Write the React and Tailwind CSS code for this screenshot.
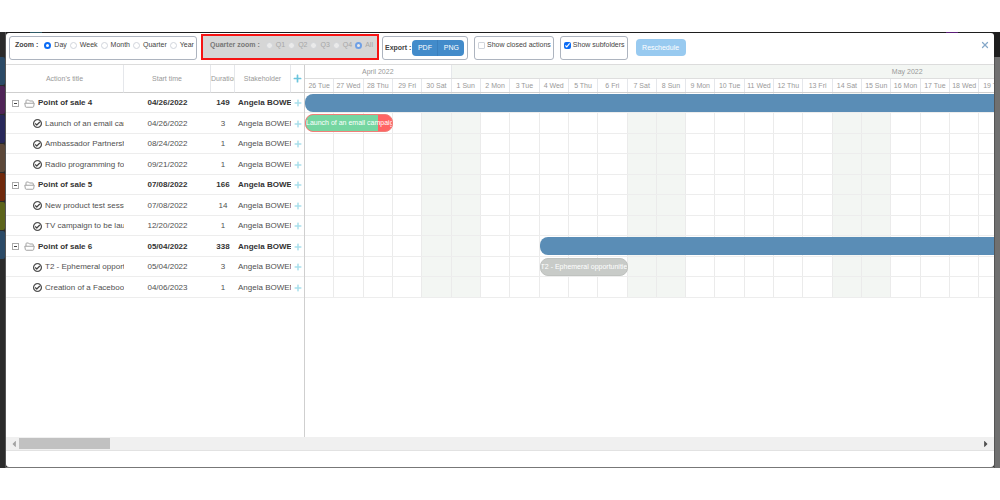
import { useState } from 'react'
import { FaPlus, FaRegCheckCircle, FaCaretLeft, FaCaretRight } from 'react-icons/fa'
import { X } from 'lucide-react'

const TASKS = [
    { id: 1,  title: 'Point of sale 4', start: '04/26/2022', duration: 149, folder: true, bar: 'col-start-1 col-end-48' },
    { id: 2,  title: 'Launch of an email campaign', start: '04/26/2022', duration: 3, bar: 'col-start-1 col-span-6', progress: 79 },
    { id: 3,  title: 'Ambassador Partnership', start: '08/24/2022', duration: 1 },
    { id: 4,  title: 'Radio programming for', start: '09/21/2022', duration: 1 },
    { id: 5,  title: 'Point of sale 5', start: '07/08/2022', duration: 166, folder: true },
    { id: 6,  title: 'New product test session', start: '07/08/2022', duration: 14 },
    { id: 7,  title: 'TV campaign to be launched', start: '12/20/2022', duration: 1 },
    { id: 8,  title: 'Point of sale 6', start: '05/04/2022', duration: 338, folder: true, bar: 'col-start-17 col-end-48' },
    { id: 9,  title: 'T2 - Ephemeral opportunities', start: '05/04/2022', duration: 3, bar: 'col-start-17 col-span-6' },
    { id: 10, title: 'Creation of a Facebook', start: '04/06/2023', duration: 1 },
]

const DAYS = [
    '26 Tue', '27 Wed', '28 Thu', '29 Fri', '30 Sat', '1 Sun', '2 Mon', '3 Tue',
    '4 Wed', '5 Thu', '6 Fri', '7 Sat', '8 Sun', '9 Mon', '10 Tue', '11 Wed',
    '12 Thu', '13 Fri', '14 Sat', '15 Sun', '16 Mon', '17 Tue', '18 Wed', '19 Thu',
]

const STRIPES = ['bg-[#2b4a66]', 'bg-[#4f2457]', 'bg-[#28285a]', 'bg-[#5c4839]', 'bg-[#70290c]', 'bg-[#5c641b]', 'bg-[#2b4a66]']

// Two tracks per day, the last day is cut in half by the window edge
const TRACKS = 'grid grid-cols-[repeat(47,minmax(0,1fr))]'

const isWeekend = day => day.endsWith('Sat') || day.endsWith('Sun')
const daySpan = i => (i === DAYS.length - 1 ? 'col-span-1' : 'col-span-2 border-r')
const rowHeight = i => (i % 2 ? 'h-[21px]' : 'h-5')

function FolderIcon() {
    return (
        <svg
            className="mr-[3px] ml-[5px] h-[9px] w-[11px] shrink-0 text-[#999]"
            viewBox="0 0 22 18"
            fill="none"
            stroke="currentColor"
            strokeWidth="1.8"
            strokeLinejoin="round"
        >
            <path d="M4 8V3.5Q4 2 5.500 2H9L11 4H17Q18.500 4 18.500 5.500V8" />
            <path d="M1.500 8.500H20.500L19.300 15Q19 16.500 17.500 16.500H4.500Q3 16.500 2.700 15Z" />
        </svg>
    )
}

function RadioGroup({ name, label, options, value, onChange, disabled }) {
    return (
        <div role="radiogroup" aria-label={label} className="flex items-center gap-[3px]">
            {options.map(option => (
                <label key={option} className={`flex items-center gap-[3px] ${disabled ? 'opacity-50' : ''}`}>
                    <input
                        type="radio"
                        name={name}
                        checked={value === option}
                        onChange={() => onChange(option)}
                        className="size-[7px] appearance-none rounded-full border border-gray-300 bg-white checked:border-2 checked:border-[#0b6cf5]"
                    />
                    {option}
                </label>
            ))}
        </div>
    )
}

function CheckOption({ label, checked, onChange }) {
    return (
        <label className="flex h-6 items-start gap-[2px] rounded-[3px] border border-gray-400/80 pt-[3px] pr-[2px] pl-[3px]">
            <input
                type="checkbox"
                checked={checked}
                onChange={onChange}
                className="mt-[2px] size-[7px] appearance-none rounded-[1px] border border-gray-300 accent-[#0b6cf5] checked:appearance-auto"
            />
            <span className="leading-[10px]">{label}</span>
        </label>
    )
}

function Toolbar() {
    const [zoom, setZoom]             = useState('Day')
    const [quarter, setQuarter]       = useState('All')
    const [closed, setClosed]         = useState(false)
    const [subfolders, setSubfolders] = useState(true)

    return (
        <div className="flex h-[31px] items-end pb-1 pl-[3px] text-[7px] leading-[10px] whitespace-nowrap text-[#444]">
            <div className="flex h-6 w-[188px] items-start gap-[6px] rounded-[3px] border border-gray-400/80 pt-[3px] pl-[5px]">
                <b>Zoom :</b>
                <RadioGroup
                    name="zoom"
                    label="Zoom"
                    options={['Day', 'Week', 'Month', 'Quarter', 'Year']}
                    value={zoom}
                    onChange={setZoom}
                />
            </div>

            <div className="ml-1 flex h-[26px] w-[178px] items-start gap-[6px] border-2 border-[#f61414] bg-[#d6d6d6] pt-1 pl-[7px] text-[#777]">
                <b>Quarter zoom :</b>
                <RadioGroup
                    name="quarter"
                    label="Quarter zoom"
                    options={['Q1', 'Q2', 'Q3', 'Q4', 'All']}
                    value={quarter}
                    onChange={setQuarter}
                    disabled
                />
            </div>

            <div className="ml-[3px] flex h-6 w-[86px] items-center gap-px rounded-[3px] border border-gray-400/80 pl-[2px]">
                <b>Export :</b>
                <div className="flex h-4">
                    <button className="w-[26px] rounded-l-sm border-r border-[#3a7fbd] bg-[#428bca] text-white">PDF</button>
                    <button className="w-[26px] rounded-r-sm bg-[#428bca] text-white">PNG</button>
                </div>
            </div>

            <div className="ml-[6px] flex gap-[6px]">
                <CheckOption label="Show closed actions" checked={closed} onChange={() => setClosed(!closed)} />
                <CheckOption label="Show subfolders" checked={subfolders} onChange={() => setSubfolders(!subfolders)} />
            </div>

            <button className="mb-1 ml-2 h-[17px] w-[50px] rounded-sm bg-[#98caf0] text-white">Reschedule</button>

            <button aria-label="Close" className="mr-1 mb-[10px] ml-auto text-[#86a9c9]">
                <X size={10} strokeWidth={3} />
            </button>
        </div>
    )
}

function TaskTable() {
    return (
        <table className="w-[298px] shrink-0 table-fixed border-separate border-spacing-0 self-start text-[8px] leading-[10px] whitespace-nowrap text-[#505050]">
            <colgroup>
                <col className="w-[118px]" />
                <col className="w-[87px]" />
                <col className="w-6" />
                <col className="w-14" />
                <col className="w-[13px]" />
            </colgroup>
            <thead>
                <tr className="h-7 text-[7px] text-[#999] *:border-b *:border-b-[#cfcfcf] *:p-0 *:font-normal">
                    <th className="border-r border-r-gray-200">Action's title</th>
                    <th className="border-r border-r-gray-200">Start time</th>
                    <th className="overflow-hidden border-r border-r-gray-200">Duration</th>
                    <th className="border-r border-r-gray-200">Stakeholder</th>
                    <th>
                        <button aria-label="Add action" className="block pl-[2px] text-[#6cc5dd]"><FaPlus size={9} /></button>
                    </th>
                </tr>
            </thead>
            <tbody>
                {TASKS.map((task, i) => (
                    <tr
                        key={task.id}
                        className={`*:border-b *:border-[#ededed] *:px-0 *:pt-px *:pb-0 ${rowHeight(i)} ${task.folder ? 'font-bold text-[#333]' : ''}`}
                    >
                        <td className="overflow-hidden">
                            {task.folder ? (
                                <div className="flex items-center pl-[6px]">
                                    <button
                                        aria-label="Collapse"
                                        className="flex size-[7px] shrink-0 items-center justify-center border border-[#aaa]"
                                    >
                                        <span className="h-px w-[3px] bg-[#444]" />
                                    </button>
                                    <FolderIcon />
                                    {task.title}
                                </div>
                            ) : (
                                <div className="flex items-center gap-[3px] pl-[27px]">
                                    <FaRegCheckCircle size={9} className="shrink-0 stroke-[#333] stroke-[16] text-[#333]" />
                                    {task.title}
                                </div>
                            )}
                        </td>
                        <td className="text-center">{task.start}</td>
                        <td className="text-center">{task.duration}</td>
                        <td className="overflow-hidden"><div className="pl-[3px]">Angela BOWEN</div></td>
                        <td>
                            <button aria-label="Add action" className="block pl-[3px] text-[#a9dfeb]"><FaPlus size={8} /></button>
                        </td>
                    </tr>
                ))}
            </tbody>
        </table>
    )
}

function Bar({ task }) {
    const place = `mt-px h-[18px] ${task.bar}`

    if (task.folder) {
        return <div className={`${place} rounded-l-lg bg-[#5a8db6]`} />
    }

    return (
        <div
            className={`${place} grid items-center overflow-hidden rounded-lg border text-[7px] leading-[10px] whitespace-nowrap text-white ${
                task.progress ? 'border-[#f07f78] bg-[#ff6464]' : 'border-[#bfc2bf] bg-[#c8cbc8]'
            }`}
        >
            {task.progress && (
                <div className="col-start-1 row-start-1 h-4 bg-[#75d6a1]" style={{ width: `${task.progress}%` }} />
            )}
            <span className="col-start-1 row-start-1">{task.title}</span>
        </div>
    )
}

function Timeline() {
    return (
        <div className="min-w-0 flex-1 overflow-hidden border-l border-[#cfcfcf] text-[7px] whitespace-nowrap text-[#999]">
            <div className={`${TRACKS} h-[14px] border-b border-[#dedede] text-center leading-[13px]`}>
                <div className="col-span-10 border-r border-gray-200">April 2022</div>
                <div className="col-span-37 overflow-hidden bg-[#f3f6f3]">
                    {/* the month runs on past the visible days */}
                    <div className="w-[168%]">May 2022</div>
                </div>
            </div>
            <div className={`${TRACKS} h-[14px] border-b border-[#cfcfcf] text-center leading-[14px]`}>
                {DAYS.map((day, i) => (
                    <div key={day} className={`overflow-hidden border-gray-200 ${daySpan(i)}`}>
                        <div className={i === DAYS.length - 1 ? 'w-[200%]' : ''}>{day}</div>
                    </div>
                ))}
            </div>

            {TASKS.map((task, i) => (
                <div key={task.id} className={`grid grid-cols-1 grid-rows-1 border-b border-[#ededed] ${rowHeight(i)}`}>
                    <div className={`${TRACKS} col-start-1 row-start-1`}>
                        {DAYS.map((day, d) => (
                            <div key={day} className={`border-[#ebebeb] ${daySpan(d)} ${isWeekend(day) ? 'bg-[#f3f6f3]' : ''}`} />
                        ))}
                    </div>
                    {task.bar && (
                        <div className={`${TRACKS} col-start-1 row-start-1`}>
                            <Bar task={task} />
                        </div>
                    )}
                </div>
            ))}
        </div>
    )
}

function ScrollBar() {
    return (
        <div className="flex h-[14px] items-center border-b border-[#e2e2e2] bg-[#f0f0f0] px-[3px] text-[#a3a3a3]">
            <button aria-label="Scroll left" className="w-[10px]"><FaCaretLeft size={10} /></button>
            <div className="h-[11px] w-[91px] bg-[#c1c1c1]" />
            <button aria-label="Scroll right" className="ml-auto text-[#505050]"><FaCaretRight size={10} /></button>
        </div>
    )
}

export default function App() {
    return (
        <div className="flex min-h-screen bg-white py-8 font-['Liberation_Sans',Arial,sans-serif]">
            {/* Page behind the dialog, left edge */}
            <div className="w-[6px] shrink-0 border-r border-[#555] bg-[#2b2b2b] pt-[25px]">
                {STRIPES.map((color, i) => (
                    <div key={i} className={`mb-px h-7 rounded-r-xs ${color}`} />
                ))}
            </div>

            <div className="flex min-w-0 flex-1 flex-col border-b border-[#777] bg-[#1e1e1e]">
                <div className="flex h-px justify-between pr-9 pl-6">
                    <span className="w-3 bg-[#2f5a66]" />
                    <span className="w-3 bg-[#5b1f78]" />
                </div>
                <main className="flex flex-1 flex-col overflow-hidden rounded-[3px] bg-white">
                    <Toolbar />
                    <div className="flex flex-1 border-t border-[#dcdcdc]">
                        <TaskTable />
                        <Timeline />
                    </div>
                    <ScrollBar />
                    <div className="h-4" />
                </main>
            </div>

            {/* Right edge */}
            <div className="flex w-[6px] shrink-0 flex-col bg-[#1e1e1e] pt-[25px]">
                <div className="flex-1 border-l border-[#555] bg-[#707070]" />
            </div>
        </div>
    )
}
